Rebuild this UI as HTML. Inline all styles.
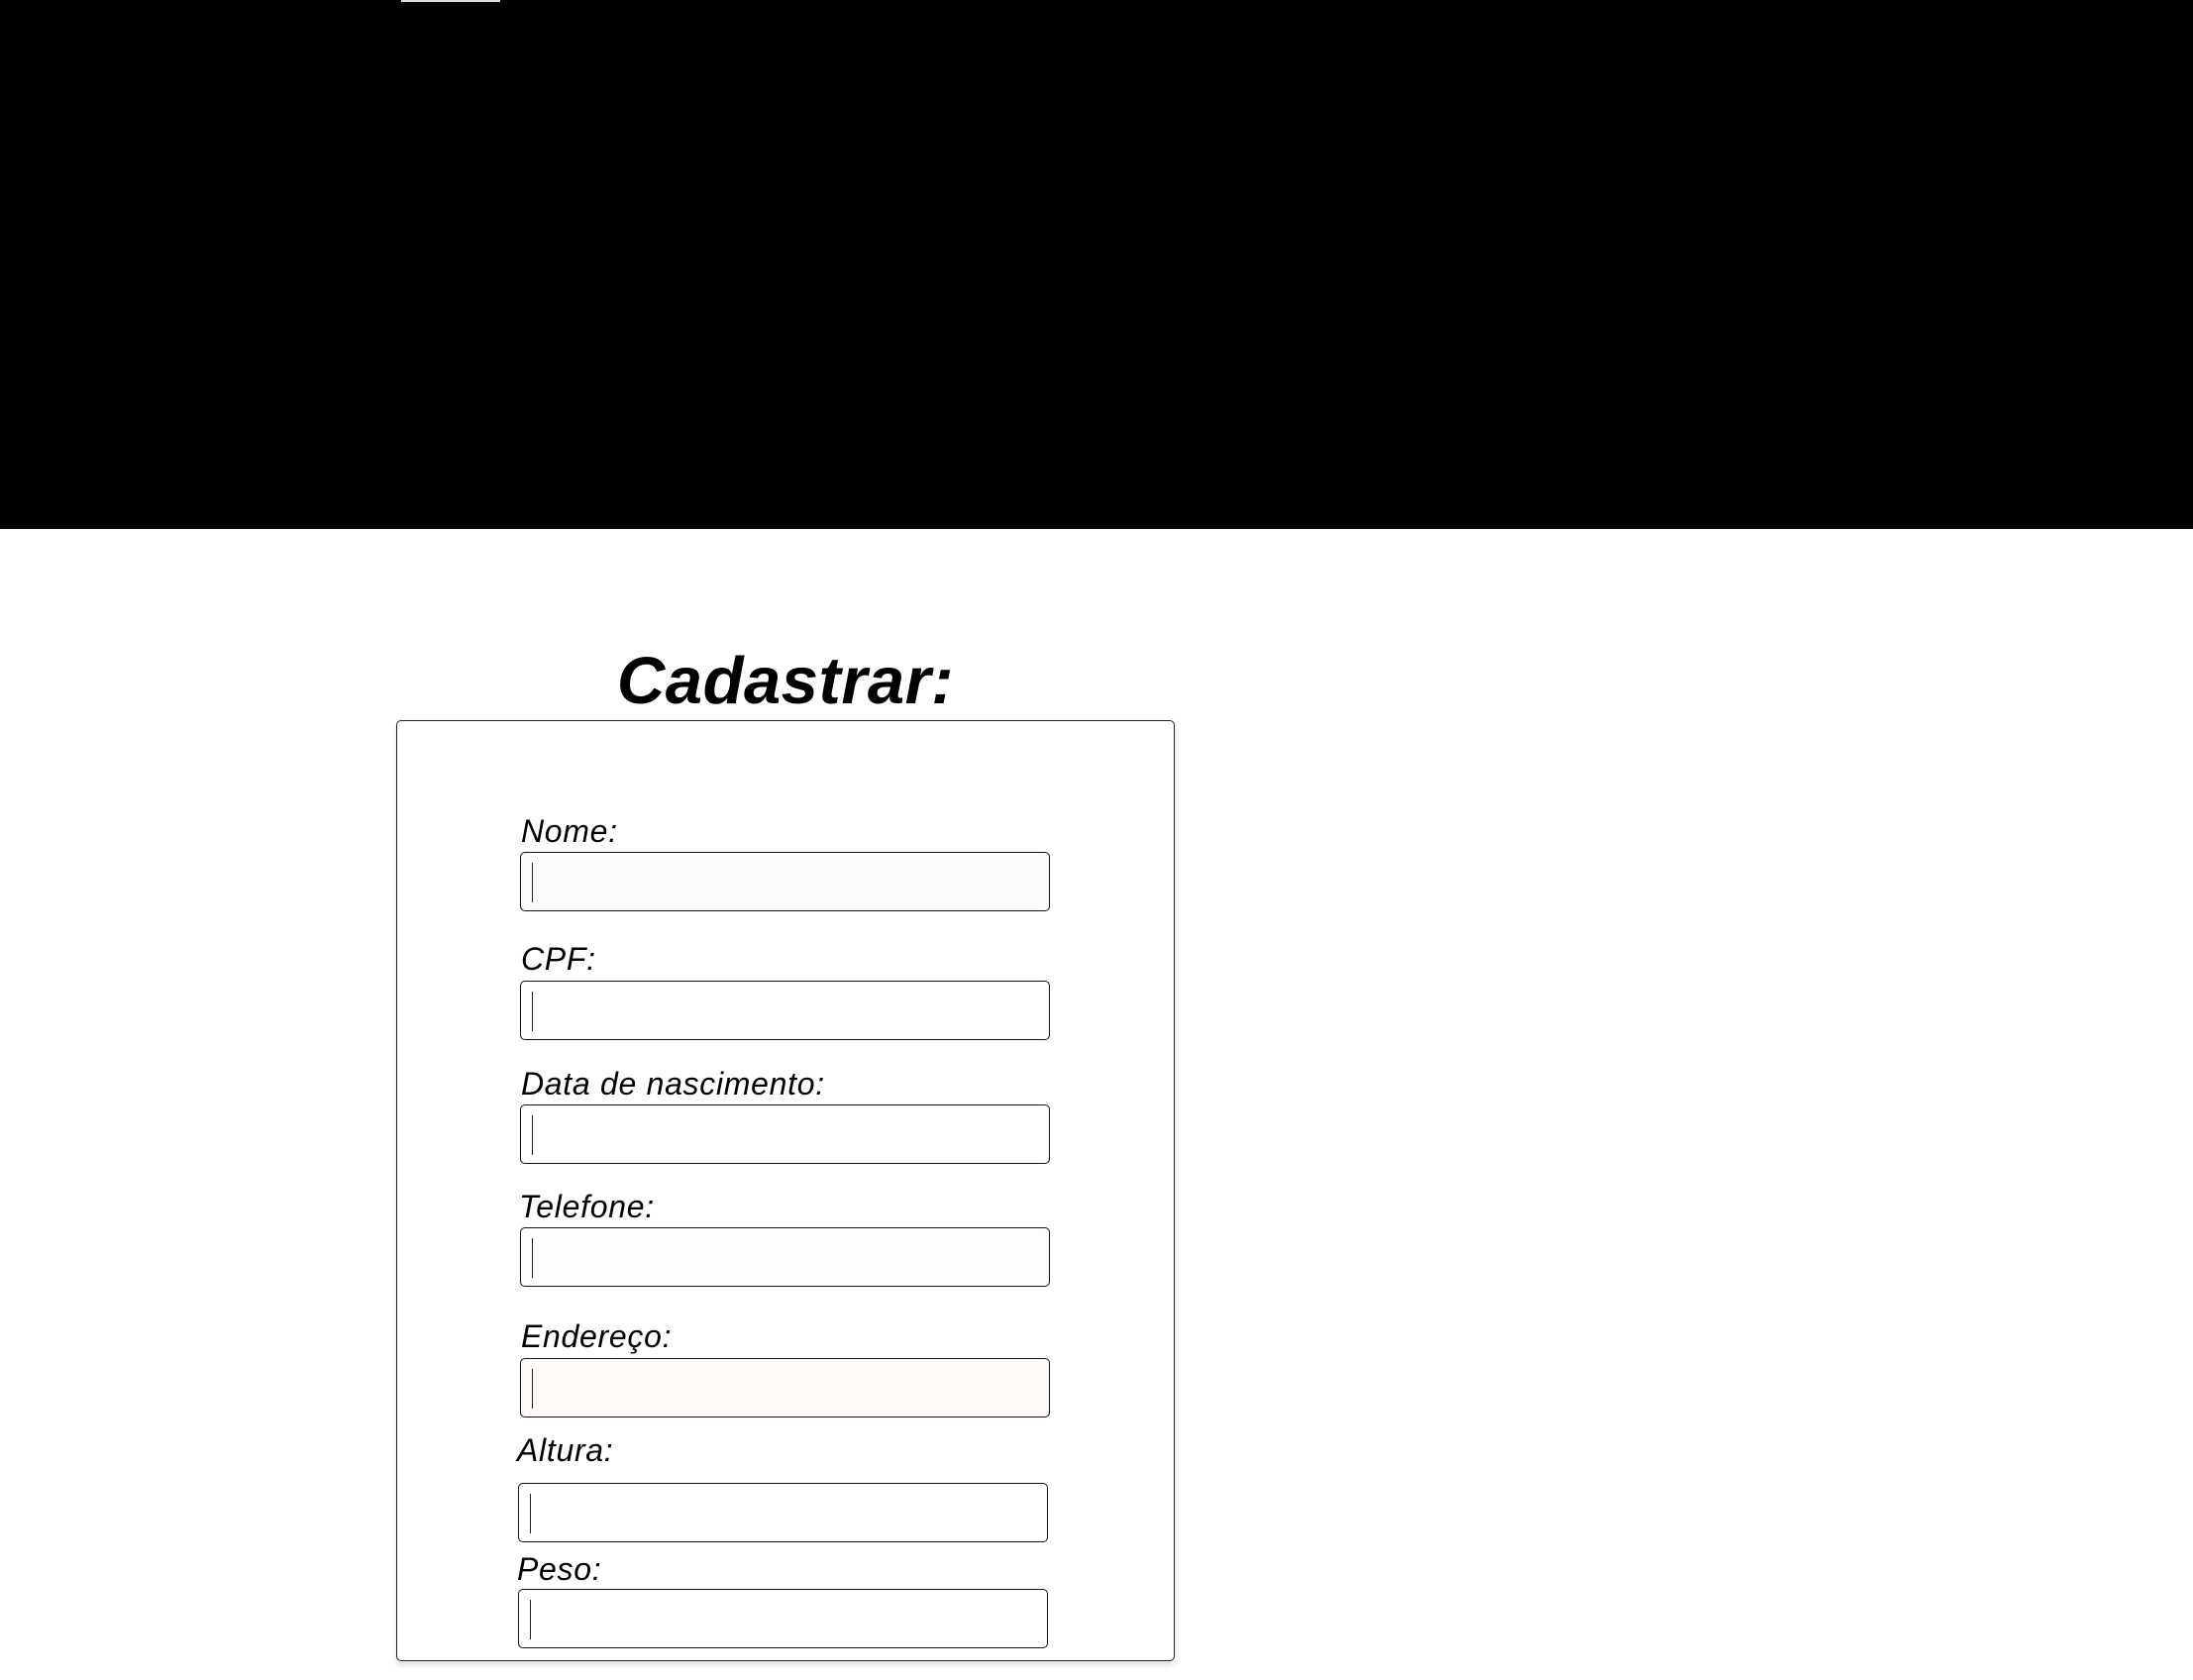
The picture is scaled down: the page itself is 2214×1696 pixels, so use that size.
<!DOCTYPE html>
<html><head><meta charset="utf-8"><style>
html,body{margin:0;padding:0;background:#fff;width:2214px;height:1696px;overflow:hidden;position:relative;font-family:"Liberation Sans",sans-serif}
.top{position:absolute;left:0;top:0;width:2214px;height:534px;background:#000}
.bar{position:absolute;left:405px;top:0;width:100px;height:2px;background:#ddd}
h1{position:absolute;left:400px;width:786px;top:656px;margin:0;font-size:67px;line-height:64px;font-weight:bold;font-style:italic;text-align:center;color:#000;letter-spacing:0.5px}
.box{position:absolute;left:400px;top:727px;width:784px;height:948px;border:1.5px solid #222;border-radius:5px;box-shadow:0 4px 6px rgba(0,0,0,0.12)}
.lab{position:absolute;font-size:32px;line-height:30px;font-style:italic;color:#000;letter-spacing:0.7px}
.in{position:absolute;width:533px;height:58px;border:1.5px solid #111;border-radius:5px;background:#fff;box-sizing:content-box}
.in::after{content:"";position:absolute;left:11px;top:10px;width:1px;height:40px;background:#222}
</style></head><body>
<div class="top"><div class="bar"></div></div>
<h1>Cadastrar:</h1>
<div class="box"></div>
<div class="lab" style="left:526px;top:824px">Nome:</div>
<div class="in" style="left:525px;top:860px;background:#fdfcfa"></div>
<div class="lab" style="left:526px;top:953px">CPF:</div>
<div class="in" style="left:525px;top:990px"></div>
<div class="lab" style="left:526px;top:1079px">Data de nascimento:</div>
<div class="in" style="left:525px;top:1115px"></div>
<div class="lab" style="left:524px;top:1203px">Telefone:</div>
<div class="in" style="left:525px;top:1239px;background:#fffcfd"></div>
<div class="lab" style="left:526px;top:1334px">Endereço:</div>
<div class="in" style="left:525px;top:1371px;background:#fff9f8"></div>
<div class="lab" style="left:522px;top:1449px">Altura:</div>
<div class="in" style="left:523px;top:1497px"></div>
<div class="lab" style="left:522px;top:1569px">Peso:</div>
<div class="in" style="left:523px;top:1604px"></div>
</body></html>
